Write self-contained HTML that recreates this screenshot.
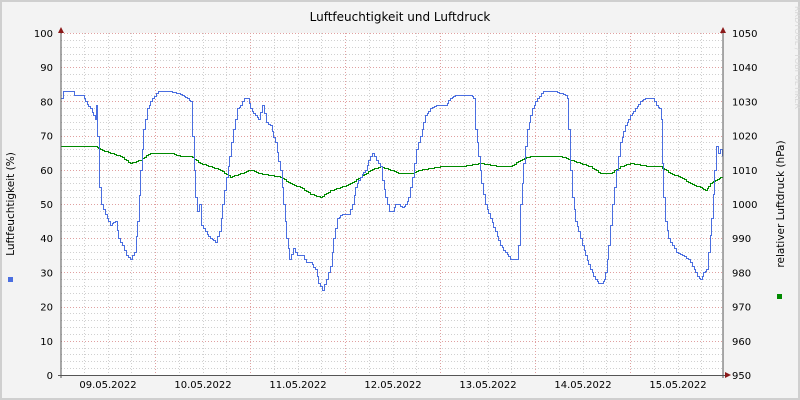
<!DOCTYPE html>
<html><head><meta charset="utf-8"><style>
body{margin:0;width:800px;height:400px;overflow:hidden;background:#f3f3f3}
svg{display:block;font-family:"DejaVu Sans","Liberation Sans",sans-serif}
</style></head><body>
<svg id="s" width="800" height="400" xmlns="http://www.w3.org/2000/svg">
<rect x="0" y="0" width="800" height="400" fill="#f3f3f3"/>
<rect x="1" y="1" width="798" height="398" fill="none" stroke="#cfcfcf" stroke-width="2"/>
<rect x="61" y="33" width="662" height="342" fill="#ffffff"/>
<g id="grid"></g>
<g id="data"></g>
<line x1="61" y1="30" x2="61" y2="378" stroke="#555" stroke-width="1"/>
<line x1="723" y1="30" x2="723" y2="378" stroke="#555" stroke-width="1"/>
<line x1="58" y1="375.5" x2="727" y2="375.5" stroke="#555" stroke-width="1"/>
<polygon points="58,33 64,33 61,27" fill="#8b1a1a"/>
<polygon points="720,33 726,33 723,27" fill="#8b1a1a"/>
<polygon points="725,372 725,378 731,375" fill="#8b1a1a"/>
<g id="labels" font-size="10" fill="#000"></g>
<text x="400" y="21" font-size="12" text-anchor="middle" fill="#000">Luftfeuchtigkeit und Luftdruck</text>
<text transform="translate(14,204) rotate(-90)" font-size="10.5" text-anchor="middle">Luftfeuchtigkeit (%)</text>
<text transform="translate(784,204) rotate(-90)" font-size="10.5" text-anchor="middle">relativer Luftdruck (hPa)</text>
<rect x="8" y="277" width="5" height="5" fill="#4a6ee0"/>
<rect x="777" y="294" width="5" height="5" fill="#008a00"/>
<text transform="translate(795,6) rotate(90)" font-size="8" fill="#d8d8d8">RRDTOOL / TOBI OETIKER</text>
</svg>
<script>
var ns='http://www.w3.org/2000/svg';
var G="61,67 95,67 100,66 110,65 120,64 130,62 140,63 150,65 170,65 180,64 190,64 200,62 210,61 220,60 230,58 240,59 250,60 260,59 280,58 290,56 300,55 310,53 320,52 330,54 340,55 350,56 360,58 370,60 380,61 390,60 400,59 410,59 420,60 440,61 460,61 480,62 500,61 510,61 520,63 530,64 560,64 570,63 580,62 590,61 600,59 610,59 620,61 630,62 650,61 660,61 670,59 680,58 690,56 700,55 705,54 710,56 715,57 722,58";
var B="61,81 63,83 73,83 74,82 82,82 85,80 90,78 95,75 96,79 97,70 99,55 101,50 105,47 110,44 115,45 118,40 122,38 126,35 130,34 134,36 137,45 140,60 143,72 147,78 152,81 158,83 170,83 182,82 187,81 190,80 192,70 194,60 195,52 197,48 199,50 201,44 205,42 210,40 215,39 219,42 222,50 226,58 229,64 233,72 237,78 240,79 244,81 247,81 250,78 255,76 258,75 262,79 266,74 270,73 275,68 280,60 283,50 286,40 289,34 293,37 297,35 302,35 306,33 310,33 315,31 318,27 322,25 326,28 330,32 333,40 337,46 342,47 348,47 352,50 355,55 360,58 365,60 368,63 372,65 376,63 380,61 382,57 385,52 389,48 392,48 395,50 398,50 402,49 405,50 408,52 412,58 416,66 420,70 425,76 430,78 436,79 445,79 450,81 455,82 470,82 473,81 475,72 478,64 481,56 485,50 490,46 495,42 500,38 505,36 510,34 516,34 518,38 520,50 523,62 527,72 532,78 537,81 543,83 555,83 565,82 567,81 568,72 570,60 572,52 575,45 578,42 582,38 585,35 590,31 595,28 598,27 601,27 604,28 605,30 608,38 612,50 616,60 620,68 625,73 630,76 635,78 640,80 645,81 652,81 656,79 659,78 661,75 662,62 663,52 665,45 668,40 672,38 676,36 682,35 688,34 692,32 697,29 700,28 703,30 706,31 708,36 711,46 714,60 716,67 718,65 720,66 722,64";
function step(str,col){
 var pts=str.split(' ').map(function(s){return s.split(',').map(Number)});
 var out=[],px=null,py=null;
 pts.forEach(function(q){var x=q[0],y=q[1];
  if(px===null){out.push([x,y]);px=x;py=y;return;}
  var dx=x-px,n=Math.max(1,Math.round(Math.abs(dx)/2));
  for(var i=1;i<=n;i++){var nx=Math.round(px+dx*i/n),ny=py+(y-py)*i/n;
   var last=out[out.length-1];out.push([nx,last[1]]);out.push([nx,ny]);}
  px=x;py=y;});
 var p=document.createElementNS(ns,'polyline');
 p.setAttribute('points',out.map(function(a){return (a[0]+0.5)+','+(Math.round(375-3.42*a[1])+0.5)}).join(' '));
 p.setAttribute('fill','none');p.setAttribute('stroke',col);p.setAttribute('stroke-width','1');
 p.setAttribute('shape-rendering','crispEdges');
 document.getElementById('data').appendChild(p);
}
step(G,'#008a00');step(B,'#4a6ee0');
var g=document.getElementById('grid'),L=document.getElementById('labels');
function ln(x1,y1,x2,y2,c){var l=document.createElementNS(ns,'line');l.setAttribute('x1',x1);l.setAttribute('y1',y1);l.setAttribute('x2',x2);l.setAttribute('y2',y2);l.setAttribute('stroke',c);l.setAttribute('stroke-dasharray','1,2');l.setAttribute('stroke-width','1');g.appendChild(l);}
function tx(x,y,t,a){var e=document.createElementNS(ns,'text');e.setAttribute('x',x);e.setAttribute('y',y);e.setAttribute('text-anchor',a);e.textContent=t;L.appendChild(e);}
for(var v=0;v<=100;v+=2){var y=Math.round(375-3.42*v)+0.5;if(v%10)ln(61,y,723,y,'#d0d0d0');}
for(var x=155-95;x<723;x+=23.75){if(x>61&&Math.abs((x-155)%95)>1)ln(Math.round(x)+0.5,33,Math.round(x)+0.5,375,'#d0d0d0');}
for(var v=10;v<=100;v+=10){var y=Math.round(375-3.42*v)+0.5;ln(61,y,723,y,'#e0a0a0');}
for(var x=155;x<723;x+=95)ln(x+0.5,33,x+0.5,375,'#e0a0a0');
for(var v=0;v<=100;v+=10){var y=375-3.42*v+4;tx(53,y,String(v),'end');tx(732,y,String(950+v),'start');}
var d=['09','10','11','12','13','14','15'];for(var i=0;i<7;i++)tx(108+95*i,388,d[i]+'.05.2022','middle');
</script>
</body></html>
